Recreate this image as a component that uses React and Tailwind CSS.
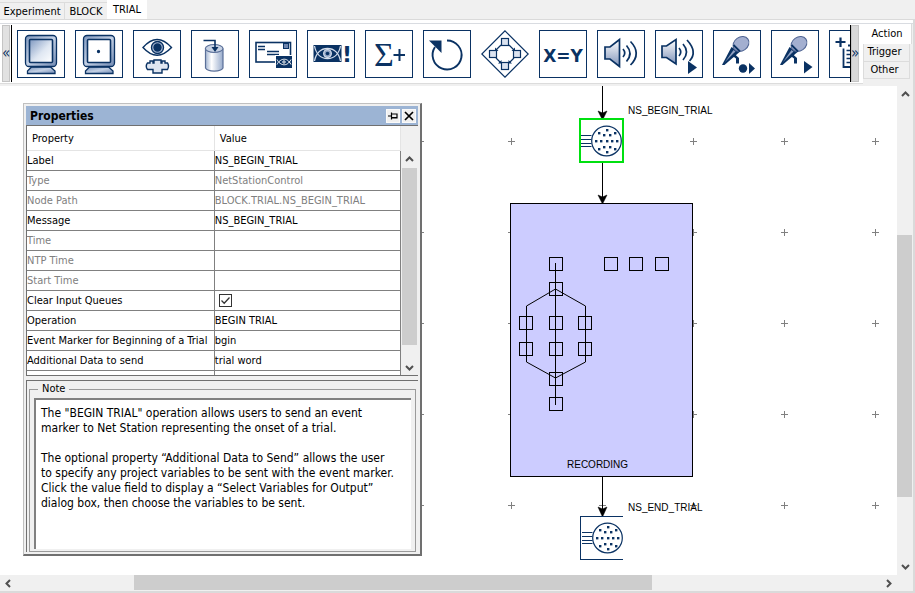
import React from "react";

const NAVY = "#0a3263";
const uiFont = "font-['DejaVu_Sans_Condensed','DejaVu_Sans',sans-serif]";

/* ---------- toolbar icons, all drawn on a 48 x 48 grid ---------- */

function Defs() {
  return (
    <svg className="absolute size-0" aria-hidden="true">
      <defs>
        <linearGradient id="steel" x1="0" y1="0" x2="1" y2="1">
          <stop offset="0" stopColor="#7e97bd" />
          <stop offset="0.5" stopColor="#c3d0e4" />
          <stop offset="1" stopColor="#7089b2" />
        </linearGradient>
        <linearGradient id="screen" x1="0" y1="0" x2="1" y2="1">
          <stop offset="0" stopColor="#7f98c0" />
          <stop offset="0.55" stopColor="#dfe7f2" />
          <stop offset="1" stopColor="#ffffff" />
        </linearGradient>
        <linearGradient id="tube" x1="0" y1="0" x2="1" y2="0">
          <stop offset="0" stopColor="#a3b5d2" />
          <stop offset="0.35" stopColor="#ffffff" />
          <stop offset="1" stopColor="#96aacb" />
        </linearGradient>
        <linearGradient id="cone" x1="0" y1="0" x2="0" y2="1">
          <stop offset="0" stopColor="#ffffff" />
          <stop offset="1" stopColor="#8094ba" />
        </linearGradient>
      </defs>
    </svg>
  );
}

function Monitor({ dot }) {
  return (
    <g stroke={NAVY} strokeWidth="1.3">
      <path d="M14.500 37 L33.500 37 L38 41 V43.500 H10.500 V41 Z" fill="url(#steel)" />
      <rect x="8.500" y="5.500" width="31" height="31" rx="3.500" fill="url(#steel)" />
      <rect x="12.500" y="9.500" width="23" height="23" rx="1" fill={dot ? "#fff" : "url(#screen)"} strokeWidth="1.600" />
      {dot && <circle cx="23.500" cy="21.500" r="1" fill={NAVY} />}
    </g>
  );
}

function EyeDevice() {
  return (
    <g stroke={NAVY} strokeWidth="1.400" fill="none">
      <path d="M10 17.500 Q24 1.500 38.500 17.500 Q24 33 10 17.500 Z" fill="#fff" />
      <circle cx="24.500" cy="17.500" r="6" fill="#a9bad6" />
      <circle cx="24.500" cy="17.500" r="3.500" fill={NAVY} />
      <path d="M14.500 33 H17 V31 H20 V33 H21 V30 H28 V33 H29 V31 H32 V33 H34.500 Q36.500 36 34.500 39.500 H29 V43 H20 V39.500 H14.500 Q12 36 14.500 33 Z" fill="#dfe6f1" />
    </g>
  );
}

function Cylinder() {
  return (
    <g stroke={NAVY} strokeWidth="1.200">
      <path d="M14.500 18.500 V38 A9 4 0 0 0 32 38 V18.500" fill="url(#tube)" stroke="#5b7099" />
      <ellipse cx="23.200" cy="18.500" rx="8.800" ry="4" fill="#c6d1e3" stroke="#5b7099" />
      <path d="M12.500 10.500 H24 V19" fill="none" strokeWidth="1.600" />
      <path d="M20.500 17 L27.500 17 L24 22 Z" fill={NAVY} stroke="none" />
    </g>
  );
}

function Envelope() {
  return (
    <g stroke={NAVY} fill="none">
      <rect x="7" y="12.500" width="34.500" height="19.500" strokeWidth="1.600" fill="#fff" />
      <rect x="34.500" y="13.500" width="5" height="5" fill="#6f86ae" />
      <path d="M9 16.500 H16 M9 19.500 H16 M18 21.500 H30 M18 24.500 H30" strokeWidth="1.300" />
      <rect x="26.500" y="25.500" width="17" height="13" fill={NAVY} stroke="#fff" />
      <g stroke="#fff" strokeWidth="1">
        <path d="M28 29.500 C31 35.500 38 37.500 42 29.500 M28 34.500 C31 28.500 38 26.500 42 34.500" />
        <circle cx="35" cy="32" r="1.200" />
      </g>
    </g>
  );
}

function EyeAlert() {
  return (
    <g>
      <rect x="6.500" y="15" width="28" height="17" fill={NAVY} />
      <g fill="none" stroke="#d5deec" strokeWidth="1.300">
        <path d="M7.500 16 C9 24 14 28.500 20.500 28.500 C27 28.500 32 24 33.500 16" />
        <path d="M7.500 31 C9 23 14 18.500 20.500 18.500 C27 18.500 32 23 33.500 31" />
        <circle cx="20.500" cy="23.500" r="3.800" fill="#8fa3c4" />
      </g>
      <circle cx="20.500" cy="23.500" r="1.800" fill={NAVY} />
      <text x="35" y="32" fill={NAVY} className="font-['DejaVu_Sans',sans-serif] text-[22px] font-bold">!</text>
    </g>
  );
}

function SigmaPlus() {
  return (
    <g>
      <text x="9" y="36" fill={NAVY} className="font-['Liberation_Serif',serif] text-[34px]">Σ</text>
      <path d="M28.500 25 H40 M34.500 19 V31" stroke={NAVY} strokeWidth="2" />
    </g>
  );
}

function Loop() {
  return (
    <g>
      <path d="M24 10.500 A14.500 14.500 0 1 1 12 17" fill="none" stroke={NAVY} strokeWidth="1.900" />
      <path d="M6 10.500 H18.500 V23 Z" fill={NAVY} />
    </g>
  );
}

function Diamond() {
  const boxes = [[24, 12], [12, 24], [36, 24], [24, 36]];
  return (
    <g stroke={NAVY} strokeWidth="1.200">
      <path d="M24 0.800 L47.200 24 L24 47.200 L0.800 24 Z" fill="#fff" />
      {boxes.map(([x, y]) => (
        <rect key={`${x}-${y}`} x={x - 3.5} y={y - 3.5} width="7" height="7" fill="#dbe3f0" />
      ))}
      <path d="M20 15 L15 20 M28 15 L33 20 M15 28 L19.500 32.500 M33 28 L28.500 32.500" />
      <path d="M14 21 V17.500 L17.500 21 Z M34 21 V17.500 L30.500 21 Z M20.500 33.500 V30 L17 33.500 Z M27.500 33.500 V30 L31 33.500 Z" fill={NAVY} stroke="none" />
    </g>
  );
}

function XEqualsY() {
  return (
    <text x="24" y="32" textAnchor="middle" fill={NAVY} className="font-['DejaVu_Sans',sans-serif] text-[17px] font-bold">
      X=Y
    </text>
  );
}

const PLAY = "M33 31 L42 37.500 L33 44 Z";

function Speaker({ play }) {
  return (
    <g stroke={NAVY} strokeWidth="1.700" fill="none">
      {play ? (
        <g>
          <path d="M7 16 H11.500 L21 9.500 V34 L11.500 27.500 H7 Z" fill="url(#cone)" />
          <path d="M24 18 Q27.500 22 24 26 M28 14 Q35 22 28 30 M32 10 Q43 22 34.500 31" />
          <path d={PLAY} fill={NAVY} stroke="none" />
        </g>
      ) : (
        <g>
          <path d="M8 17 H13 L22.500 9.500 V36.500 L13 29 H8 Z" fill="url(#cone)" />
          <path d="M26 19 Q29.500 23 26 27 M29.500 15.500 Q36.500 23.500 29.500 31.500 M33.500 11.500 Q45 23.500 33.500 35" />
        </g>
      )}
    </g>
  );
}

function Microphone({ dot }) {
  return (
    <g fill={NAVY}>
      <path d="M9 35 L18.500 17 L26.500 22 L11.500 35 Z" />
      <path d="M12 32 L20.500 20 L22.500 21.500 Z" fill="#8fa0c2" />
      <path d="M17 27.500 L21 23.500 L26 28 V33.500 H23 V28.500 L21 27 Z" />
      <ellipse cx="28" cy="14" rx="8.500" ry="6.800" transform="rotate(-35 28 14)" fill="#a3afd0" stroke="#4d6291" />
      <path d="M20.500 15 L27 21.500" stroke={NAVY} strokeWidth="1.800" />
      {dot ? (
        <g>
          <circle cx="30" cy="38.500" r="4.200" />
          <path d="M36 33 L42 38.500 L36 44 Z" />
        </g>
      ) : (
        <path d="M33 31 L41.500 37 L33 43.500 Z" />
      )}
    </g>
  );
}

function AddList() {
  return (
    <g stroke={NAVY} fill="none">
      <path d="M6.500 12 H16.500 M11.500 7.500 V17" strokeWidth="2.200" />
      <path d="M19 15.500 H38 V37 H14.500 V18.500" strokeWidth="1.800" />
      <path d="M17.500 20.500 H34 M17.500 24.500 H34 M17.500 28.500 H34 M17.500 32.500 H34" strokeWidth="1.400" />
    </g>
  );
}

const TOOLS = [
  ["Slide display", <Monitor />],
  ["Text display", <Monitor dot />],
  ["Eye tracker wait", <EyeDevice />],
  ["Port output", <Cylinder />],
  ["Message", <Envelope />],
  ["Eye alert", <EyeAlert />],
  ["Accumulate", <SigmaPlus />],
  ["Loop", <Loop />],
  ["Sequence", <Diamond />],
  ["Assign variable", <XEqualsY />],
  ["Play sound", <Speaker />],
  ["Start sound", <Speaker play />],
  ["Record sound", <Microphone dot />],
  ["Start recording", <Microphone />],
  ["Add to list", <AddList />],
];

function Toolbar() {
  return (
    <div className="flex h-[61px] border-t border-[#d9dce1] bg-[#f0f0f0]">
      <div className="flex min-w-0 flex-1 border-b border-[#dcdcdc] bg-white py-px pl-0.5">
        <button aria-label="Scroll tools left" className="z-10 flex w-2 items-center justify-center border border-[#c4c4c4] bg-[#e1e1e1] text-[15px] text-[#0a3263]">
          <span className="shrink-0">«</span>
        </button>
        <div className="ml-px flex min-w-0 flex-1 items-center gap-2.5 overflow-hidden border-x border-black px-[5px]">
          {TOOLS.map(([name, art]) => (
            <button
              key={name}
              aria-label={name}
              className={`size-12 shrink-0 ${name === "Sequence" ? "" : "shadow-[inset_0_0_0_1px_#0a3263]"}`}
            >
              <svg viewBox="0 0 48 48" className="size-12">{art}</svg>
            </button>
          ))}
        </div>
        <button aria-label="Scroll tools right" className="z-10 flex w-2 items-center justify-center border border-[#c4c4c4] bg-[#d9d9d9] text-[15px] text-[#0a3263]">
          <span className="shrink-0">»</span>
        </button>
        <div className="w-1" />
      </div>
      <div role="tablist" aria-label="Node groups" className="mr-px flex w-[49px] flex-col text-[11px]">
        <button role="tab" aria-selected="true" className="h-5 border-r border-[#dcdcdc] bg-white">Action</button>
        <button role="tab" aria-selected="false" className="mr-0.5 h-[18px] border border-t-0 border-[#dcdcdc] pr-1">Trigger</button>
        <button role="tab" aria-selected="false" className="mr-0.5 h-[17px] border border-t-0 border-[#dcdcdc] pr-1">Other</button>
      </div>
    </div>
  );
}

/* ---------- scroll bars ---------- */

const CHEVRON = {
  up: "M1 6 L4.500 2.500 L8 6",
  down: "M1 3 L4.500 6.500 L8 3",
  left: "M6 1 L2.500 4.500 L6 8",
  right: "M3 1 L6.500 4.500 L3 8",
};

function ArrowButton({ dir, className }) {
  return (
    <button aria-label={`Scroll ${dir}`} className={`flex shrink-0 items-center justify-center ${className}`}>
      <svg viewBox="0 0 9 9" className="size-[9px]">
        <path d={CHEVRON[dir]} fill="none" stroke="#505050" strokeWidth="2" />
      </svg>
    </button>
  );
}

/* ---------- properties window ---------- */

const ROWS = [
  ["Label", "NS_BEGIN_TRIAL"],
  ["Type", "NetStationControl", true],
  ["Node Path", "BLOCK.TRIAL.NS_BEGIN_TRIAL", true],
  ["Message", "NS_BEGIN_TRIAL"],
  ["Time", "", true],
  ["NTP Time", "", true],
  ["Start Time", "", true],
  ["Clear Input Queues", "check"],
  ["Operation", "BEGIN TRIAL"],
  ["Event Marker for Beginning of a Trial", "bgin"],
  ["Additional Data to send", "trial word"],
  ["", ""],
];

const NOTE = `The "BEGIN TRIAL" operation allows users to send an event
marker to Net Station representing the onset of a trial.

The optional property “Additional Data to Send” allows the user
to specify any project variables to be sent with the event marker.
Click the value field to display a “Select Variables for Output”
dialog box, then choose the variables to be sent.`;

function PropertyTable() {
  return (
    <div className="flex h-[251px] overflow-hidden border border-r-0 border-[#707070] bg-white">
      <table className="flex-1 table-fixed border-collapse self-start text-left">
        <thead>
          <tr className="h-6">
            <th className="w-[187px] border-r border-b border-[#e4e4e4] pt-0.5 pl-[5px] font-normal">Property</th>
            <th className="w-[186px] border-r border-b border-[#e4e4e4] pt-0.5 pl-[5px] font-normal">Value</th>
          </tr>
        </thead>
        <tbody>
          {ROWS.map(([name, value, muted], i) => (
            <tr key={i} className={`h-5 ${muted ? "text-[#808080]" : "text-black"}`}>
              <td className="border-r border-b border-[#808080] p-0 pt-px leading-4">
                {value === "check" ? <label htmlFor="clear-queues">{name}</label> : name}
              </td>
              <td className="border-r border-b border-[#808080] p-0 pt-px leading-4">
                {value === "check" ? (
                  <span className="ml-1 grid size-[13px] place-items-center">
                    <input id="clear-queues" type="checkbox" defaultChecked className="col-start-1 row-start-1 size-[13px] appearance-none border border-[#333]" />
                    <svg viewBox="0 0 13 13" className="pointer-events-none col-start-1 row-start-1 size-[13px]">
                      <path d="M2.500 6.500 L5.200 9.200 L10.500 3.500" fill="none" stroke="#333" strokeWidth="1.300" />
                    </svg>
                  </span>
                ) : (
                  value
                )}
              </td>
            </tr>
          ))}
        </tbody>
      </table>
      <div className="flex w-[17px] flex-col bg-[#f0f0f0] pt-[25px]">
        <ArrowButton dir="up" className="h-[17px]" />
        <div className="mx-px h-[177px] bg-[#cdcdcd]" />
        <div className="flex-1" />
        <ArrowButton dir="down" className="h-4" />
      </div>
    </div>
  );
}

function PropertiesWindow() {
  return (
    <section
      aria-label="Properties"
      className="absolute top-[17px] left-[23px] w-[399px] border border-r-2 border-b-2 border-[#c0c0c0] border-r-[#707070] border-b-[#707070] bg-[#f0f0f0] p-0.5 text-[11px]"
    >
      <header className="flex h-[19px] items-center gap-0.5 bg-[#9cb4d4] pr-0.5 pl-1">
        <h2 className="flex-1 text-[12px] font-bold">Properties</h2>
        <button aria-label="Pin" className="grid size-3.5 place-items-center border border-[#fafafa] bg-[#f0f0f0]">
          <svg viewBox="0 0 10 10" className="size-2.5">
            <path d="M0 5 H3.500 M3.500 1.500 V8.500 M3.500 3 H9 V7 H3.500 M3.500 6.500 H9" fill="none" stroke="#000" strokeWidth="1.200" />
          </svg>
        </button>
        <button aria-label="Close" className="grid size-3.5 place-items-center border border-[#fafafa] bg-[#f0f0f0]">
          <svg viewBox="0 0 10 10" className="size-2.5">
            <path d="M1 1 L9 9 M9 1 L1 9" fill="none" stroke="#000" strokeWidth="1.700" />
          </svg>
        </button>
      </header>
      <PropertyTable />
      <div className="mt-1 border-t border-l border-[#707070] bg-[#f0f0f0] pt-px pr-0.5 pl-0.5">
        <fieldset className="border border-[#9a9a9a] px-1 pb-0.5">
          <legend id="note-title" className="ml-1 px-1 leading-[14px]">Note</legend>
          <textarea
            aria-labelledby="note-title"
            readOnly
            value={NOTE}
            className="mt-0.5 block h-[151px] w-full resize-none overflow-hidden border-t-2 border-l-2 border-[#808080] bg-white px-[5px] py-1.5 text-[12px] leading-[15px] whitespace-pre outline-none"
          />
        </fieldset>
      </div>
    </section>
  );
}

/* ---------- experiment canvas ---------- */

const GRID_X = [56, 147, 238, 329, 420, 511, 602, 693, 784, 875];
const GRID_Y = [55, 146, 237, 328, 419];

const HEAD_DOTS = [
  [27, 11], [19, 14], [35, 14], [24, 16], [30, 16], [16, 22], [21, 22], [27, 22],
  [32, 22], [37, 22], [24, 28], [30, 28], [19, 30], [35, 30], [27, 33],
];

const MINI_NODES = [
  [46, 61], [46, 86], [16, 120], [46, 120], [75, 120], [16, 146], [46, 146], [75, 146],
  [46, 176], [46, 201], [101, 61], [126, 61], [152, 61],
];

function SensorNet() {
  return (
    <svg viewBox="0 0 44 44" className="size-11 shrink-0" fill="none" stroke={NAVY}>
      <path d="M1 16.500 H11.500 M1 20.500 H11.500 M1 24.500 H11.500 M1 27.500 H11.500" strokeWidth="1.200" />
      <circle cx="26.500" cy="22" r="14.800" strokeWidth="1.200" fill="#fff" />
      {HEAD_DOTS.map(([x, y]) => (
        <rect key={`${x}-${y}`} x={x - 1} y={y - 1} width="2.400" height="2.400" fill={NAVY} stroke="none" />
      ))}
    </svg>
  );
}

function Connectors() {
  return (
    <svg className="absolute inset-0 size-full">
      <g stroke="#808080" strokeWidth="1" shapeRendering="crispEdges">
        {GRID_X.map((x) =>
          GRID_Y.map((y) => <path key={`${x}-${y}`} d={`M${x - 3} ${y + 0.5} h7 M${x + 0.5} ${y - 3} v7`} />)
        )}
      </g>
      <path d="M602.500 0 V30 M602.500 77 V112 M602.500 390 V425" stroke="#000" />
      <path d="M598 25 L602.500 27 L607 25 L602.500 34 Z M598 109 L602.500 111 L607 109 L602.500 118 Z M598 421 L602.500 423 L607 421 L602.500 431 Z" stroke="#000" strokeWidth="0.500" />
    </svg>
  );
}

function RecordingBlock() {
  return (
    <div className="absolute top-[117px] left-[510px] flex h-[274px] w-[183px] flex-col border border-black bg-[#ccccff]">
      <svg viewBox="1 1 181 250" className="w-full shrink-0" fill="none" stroke="#000">
        <g shapeRendering="crispEdges">
          {MINI_NODES.map(([x, y]) => (
            <rect key={`${x}-${y}`} x={x - 6.5} y={y - 6.5} width="13" height="13" />
          ))}
          <path d="M45.500 60 V202 M16.500 103 V159 M75.500 103 V159" />
        </g>
        <path d="M16.500 103 L45.500 86 L75.500 103 M16.500 159 L45.500 175 L75.500 159" />
      </svg>
      <span className="pl-14 font-['Liberation_Sans',Arial,sans-serif] text-[10px] leading-[22px]">RECORDING</span>
    </div>
  );
}

function Canvas() {
  return (
    <main className="relative min-w-0 flex-1 overflow-hidden bg-white">
      <Connectors />
      <RecordingBlock />
      <div className="absolute top-8 left-[579px] flex size-[45px] items-center justify-center overflow-hidden border-2 border-[#00e010] bg-white">
        <SensorNet />
      </div>
      <div className="absolute top-[430px] left-[580px] flex h-11 w-[43px] items-center overflow-hidden border-y border-l border-[#0a3263] bg-white">
        <SensorNet />
      </div>
      <span className="absolute top-[17px] left-[628px] font-['Liberation_Sans',Arial,sans-serif] text-[10px] leading-4">NS_BEGIN_TRIAL</span>
      <span className="absolute top-[414px] left-[628px] font-['Liberation_Sans',Arial,sans-serif] text-[10px] leading-4">NS_END_TRIAL</span>
      <PropertiesWindow />
    </main>
  );
}

export default function App() {
  return (
    <div className={`flex h-screen flex-col bg-[#f0f0f0] text-black ${uiFont}`}>
      <Defs />
      <div role="tablist" aria-label="Procedures" className="flex h-[19px] items-end text-[11px]">
        <button role="tab" aria-selected="false" className="h-[17px] w-[65px] border-t border-r border-[#dcdcdc] pt-0.5 leading-[14px]">Experiment</button>
        <button role="tab" aria-selected="false" className="h-[17px] w-[42px] border-t border-[#dcdcdc] pt-0.5 leading-[14px]">BLOCK</button>
        <button role="tab" aria-selected="true" className="h-[19px] w-10 bg-white leading-[14px]">TRIAL</button>
      </div>
      <div className="flex min-h-0 flex-1 flex-col border-t border-r-2 border-b-2 border-[#dadada]">
        <div className="h-[3px] bg-white" />
        <Toolbar />
        <div className="mt-0.5 flex min-h-0 flex-1">
          <Canvas />
          <div className="flex w-4 flex-col">
            <ArrowButton dir="up" className="h-[17px]" />
            <div className="flex-[132]" />
            <div className="mr-px flex-[262] bg-[#cdcdcd]" />
            <div className="flex-[60]" />
            <ArrowButton dir="down" className="h-[18px]" />
          </div>
        </div>
        <div className="flex h-4 pr-4">
          <ArrowButton dir="left" className="w-[17px]" />
          <div className="flex-[117]" />
          <div className="mb-px flex-[518] bg-[#cdcdcd]" />
          <div className="flex-[227]" />
          <ArrowButton dir="right" className="w-[18px]" />
        </div>
      </div>
    </div>
  );
}
